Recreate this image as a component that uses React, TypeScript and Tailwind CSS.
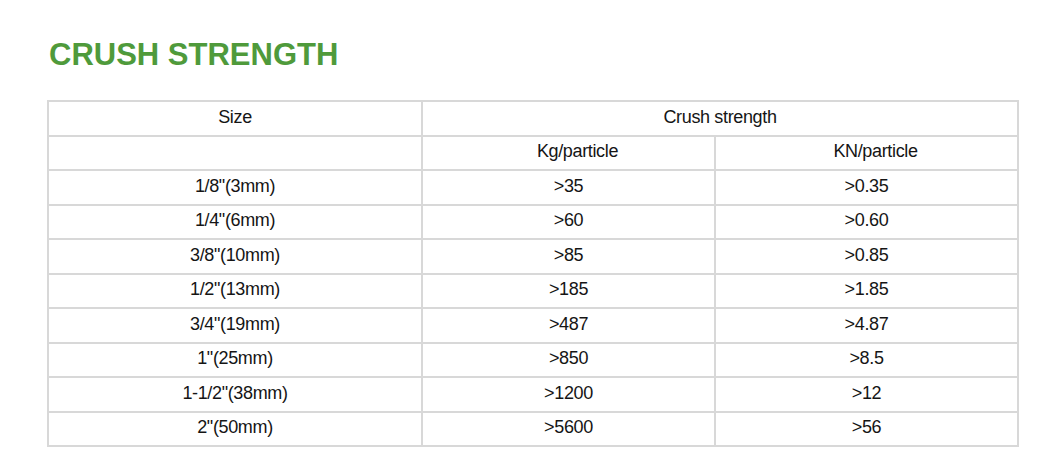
import React from "react";

const rows: [string, string, string][] = [
  ['1/8"(3mm)', ">35", ">0.35"],
  ['1/4"(6mm)', ">60", ">0.60"],
  ['3/8"(10mm)', ">85", ">0.85"],
  ['1/2"(13mm)', ">185", ">1.85"],
  ['3/4"(19mm)', ">487", ">4.87"],
  ['1"(25mm)', ">850", ">8.5"],
  ['1-1/2"(38mm)', ">1200", ">12"],
  ['2"(50mm)', ">5600", ">56"],
];

const td = "border-2 border-[#d8d8d8] text-center align-middle p-0 pb-[2px] h-[34.5px]";

export default function App() {
  return (
    <div className="w-[1060px] h-[475px] bg-white pl-[47px] pt-[39px]" style={{ fontFamily: '"Liberation Sans", Arial, sans-serif' }}>
      <h1 className="text-[31px] leading-[31px] font-bold text-[#4f9a3b] pl-[2px] m-0">CRUSH STRENGTH</h1>
      <table className="mt-[30px] w-[970px] table-fixed border-collapse text-[18px] text-[#151515] tracking-[-0.35px]">
        <colgroup>
          <col className="w-[374px]" />
          <col className="w-[293px]" />
          <col className="w-[303px]" />
        </colgroup>
        <tbody>
          <tr>
            <td className={td}>Size</td>
            <td className={td} colSpan={2}>Crush strength</td>
          </tr>
          <tr>
            <td className={td}></td>
            <td className={`${td} pl-[18px]`}>Kg/particle</td>
            <td className={`${td} pl-[18px]`}>KN/particle</td>
          </tr>
          {rows.map((r) => (
            <tr key={r[0]}>
              <td className={td}>{r[0]}</td>
              <td className={td}>{r[1]}</td>
              <td className={td}>{r[2]}</td>
            </tr>
          ))}
        </tbody>
      </table>
    </div>
  );
}
